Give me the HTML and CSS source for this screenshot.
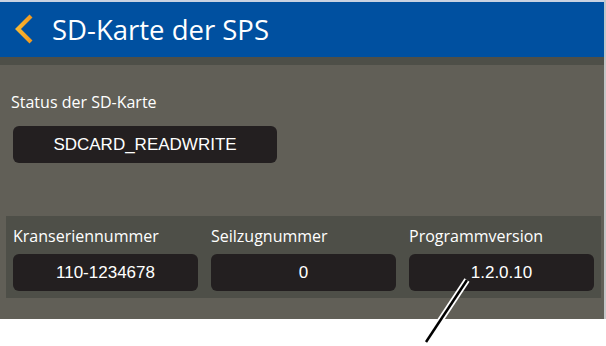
FILE: index.html
```html
<!DOCTYPE html>
<html>
<head>
    <title>SD-Karte der SPS</title>
    <link rel="stylesheet" href="styles.css">
</head>
<body>
    <div class="app">
        <div class="header">
            <svg class="back" width="24" height="32" viewBox="0 0 24 32">
                <defs>
                    <linearGradient id="chev" x1="0" y1="0" x2="1" y2="0">
                        <stop offset="0" stop-color="#f7b733"/>
                        <stop offset="1" stop-color="#f39a1e"/>
                    </linearGradient>
                </defs>
                <path d="M19 3 L6 16 L19 29" fill="none" stroke="url(#chev)" stroke-width="4.2" stroke-linecap="butt" stroke-linejoin="miter"/>
            </svg>
            <h1 class="title">SD-Karte der SPS</h1>
        </div>
        <div class="strip"></div>
        <div class="content">
            <div class="status">
                <div class="label">Status der SD-Karte</div>
                <div class="value status-value">SDCARD_READWRITE</div>
            </div>
            <div class="info">
                <div class="field">
                    <div class="label">Kranseriennummer</div>
                    <div class="value">110-1234678</div>
                </div>
                <div class="field">
                    <div class="label">Seilzugnummer</div>
                    <div class="value">0</div>
                </div>
                <div class="field">
                    <div class="label">Programmversion</div>
                    <div class="value">1.2.0.10</div>
                </div>
            </div>
        </div>
    </div>

    <svg class="pointer" width="60" height="80" viewBox="0 0 60 80">
        <line x1="48" y1="4" x2="7" y2="66" stroke="#fff" stroke-width="6"/>
        <line x1="48" y1="4" x2="7" y2="66" stroke="#000" stroke-width="2.5"/>
    </svg>
</body>
</html>
```

FILE: styles.css
```css
body {
    margin: 0;
    background: #fff;
    font-family: "Open Sans", "Liberation Sans", sans-serif;
}
.app {
    width: 604px;
    border-right: 2px solid #c4c6c8;
}
.header {
    height: 55px;
    border-top: 2px solid #c9d2e2;
    background: #0050a0;
    display: flex;
    align-items: center;
    padding-left: 12px;
}
.back {
    display: block;
    margin-top: -1px;
}
.title {
    margin: 0 0 0 16px;
    color: #fff;
    font-weight: normal;
    font-size: 27.5px;
    letter-spacing: 0;
}
.strip {
    height: 8px;
    background: #4e4f48;
}
.content {
    background: #615f57;
    padding: 26px 3px 21px 6px;
}
.status {
    padding-left: 7px;
    height: 125px;
}
.label {
    color: #fff;
    font-size: 16px;
    line-height: 22px;
    margin-left: -2px;
}
.value {
    background: #231f20;
    border-radius: 6px;
    color: #fff;
    font-family: "Liberation Sans", Arial, sans-serif;
    font-size: 17px;
    height: 37px;
    display: flex;
    align-items: center;
    justify-content: center;
}
.status-value {
    width: 264px;
    margin-top: 13px;
}
.info {
    background: #4e4f48;
    display: grid;
    grid-template-columns: repeat(3, 185px);
    column-gap: 13px;
    padding: 9px 6px 7px 7px;
}
.field .label {
    margin-left: 0;
    margin-bottom: 7px;
}
.pointer {
    position: absolute;
    left: 419px;
    top: 276px;
}
```
